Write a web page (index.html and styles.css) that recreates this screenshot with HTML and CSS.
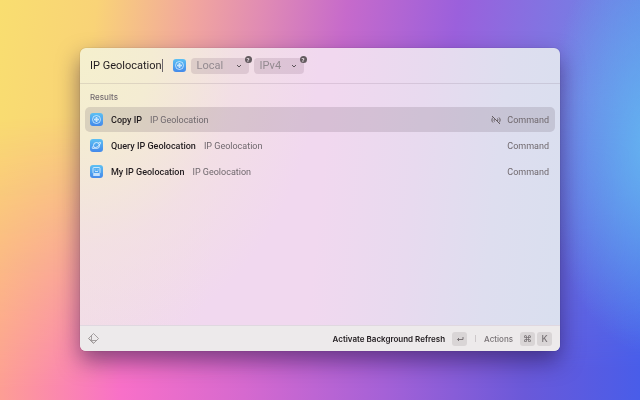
FILE: index.html
```
<!DOCTYPE html>
<html lang="en">
<head>
    <meta charset="UTF-8">
    <title>IP Geolocation</title>
    <link rel="stylesheet" href="styles.css">
</head>
<body>

    <svg class="defs" aria-hidden="true">
        <linearGradient id="blue" x1="0" y1="0" x2="0" y2="1">
            <stop offset="0" stop-color="#5cc0f3"/>
            <stop offset="1" stop-color="#4489ea"/>
        </linearGradient>
        <symbol id="icon-copy" viewBox="0 0 26 26">
            <rect width="26" height="26" rx="6" fill="url(#blue)"/>
            <g fill="none" stroke="#d8efff" stroke-width="1.6">
                <circle cx="13" cy="13" r="8"/>
                <circle cx="13" cy="13" r="3.500"/>
                <path d="M13 8v10M8 13h10"/>
            </g>
        </symbol>
        <symbol id="icon-query" viewBox="0 0 26 26">
            <rect width="26" height="26" rx="6" fill="url(#blue)"/>
            <g fill="none" stroke="#e4f4ff" stroke-width="1.8">
                <circle cx="13" cy="13" r="6"/>
                <path d="M17 8c3-2 5-2 4 1c-2 4-10 10-15 10c-3 0-1-3 1-5"/>
            </g>
        </symbol>
        <symbol id="icon-my" viewBox="0 0 26 26">
            <rect width="26" height="26" rx="6" fill="url(#blue)"/>
            <g fill="none" stroke="#e4f4ff" stroke-width="1.6">
                <rect x="6" y="5" width="14" height="12" rx="2"/>
                <path d="M10 9v2M16 9v2M10 13h6M7 21v-2h12v2z"/>
            </g>
        </symbol>
    </svg>

    <main class="window">
        <header class="search">
            <input class="search-input" type="text" value="IP Geolocation" aria-label="Search">
            <span class="caret"></span>
            <svg class="app-icon search-icon"><use href="#icon-copy"/></svg>
            <div class="argument local">
                <select aria-label="Scope"><option>Local</option></select>
                <svg class="chevron" viewBox="0 0 6 6"><path d="M1 2l2 2l2-2"/></svg>
                <span class="help">?</span>
            </div>
            <div class="argument">
                <select aria-label="IP version"><option>IPv4</option></select>
                <svg class="chevron" viewBox="0 0 6 6"><path d="M1 2l2 2l2-2"/></svg>
                <span class="help">?</span>
            </div>
        </header>

        <section class="results">
            <h2>Results</h2>
            <ul>
                <li class="row selected">
                    <svg class="app-icon"><use href="#icon-copy"/></svg>
                    <span class="name">Copy IP</span>
                    <span class="subtitle">IP Geolocation</span>
                    <svg class="inactive" viewBox="0 0 20 20">
                        <path d="M2 2l16 16M4 5c-3 3-3 7 0 10M7 8c-1 2-1 3 0 5M16 5c3 3 3 7 0 10M13 7c1 2 1 3 0 5"/>
                    </svg>
                    <span class="type">Command</span>
                </li>
                <li class="row">
                    <svg class="app-icon"><use href="#icon-query"/></svg>
                    <span class="name">Query IP Geolocation</span>
                    <span class="subtitle">IP Geolocation</span>
                    <span class="type">Command</span>
                </li>
                <li class="row">
                    <svg class="app-icon"><use href="#icon-my"/></svg>
                    <span class="name">My IP Geolocation</span>
                    <span class="subtitle">IP Geolocation</span>
                    <span class="type">Command</span>
                </li>
            </ul>
        </section>

        <footer class="actions">
            <svg class="logo" viewBox="0 0 22 22">
                <path d="M11 1l10 10l-10 10l-10-10z"/>
                <path d="M7 5v10h10M2 11l9 9"/>
            </svg>
            <button class="primary">Activate Background Refresh
                <kbd><svg class="return" viewBox="0 0 16 16"><path d="M14 4v5H3M6 6L3 9l3 3"/></svg></kbd>
            </button>
            <span class="divider"></span>
            <button class="secondary">Actions
                <span class="keys"><kbd>⌘</kbd><kbd>K</kbd></span>
            </button>
        </footer>
    </main>

</body>
</html>
```

FILE: styles.css
```
* {
    box-sizing: border-box;
}
body {
    display: flex;
    min-height: 100vh;
    margin: 0;
    padding: 48px 12.5% 49px;
    font-family: Roboto, "Liberation Sans", sans-serif;
    font-size: 9px;
    color: #211c1f;
    background: linear-gradient(98deg, #f9de70 0%, #f9d377 14%, #f1a69e 28%, #e08bb4 38%, #c66acb 50%, #9b60dc 66%, #777ce4 84%, #558bea 100%);
}
/* lower half of the wallpaper, faded into the upper one */
body::before {
    content: "";
    position: fixed;
    inset: 0;
    z-index: -1;
    background: linear-gradient(90deg, #fd9e94 0%, #fb86b0 10%, #f870c8 19%, #d669cf 38%, #a561d7 60%, #6a59d9 82%, #495de9 100%);
    -webkit-mask-image: linear-gradient(178deg, transparent 28%, #000 92%);
    mask-image: linear-gradient(178deg, transparent 28%, #000 92%);
}
/* blue glow on the right */
body::after {
    content: "";
    position: fixed;
    inset: 0;
    z-index: -1;
    background: radial-gradient(110px 210px at 102% 36%, #65b4f0 0%, #65b4f000 100%);
}
.defs {
    position: absolute;
    width: 0;
    height: 0;
}
.window {
    display: flex;
    flex-direction: column;
    flex: 1;
    border-radius: 6px;
    overflow: hidden;
    background:
        radial-gradient(50% 100% at 0 0, #f5f0cd 0%, #f4ecd3 30%, #f3e3df99 65%, #f2dbea00 100%),
        linear-gradient(96deg, #f2dde6 0%, #f1d8ef 30%, #f1d8ef 50%, #e8daef 68%, #dedeef 84%, #d9dfef 100%);
    box-shadow: 0 0 1px rgba(0, 0, 0, .4), 0 10px 22px rgba(30, 10, 60, .5);
}
.search {
    display: flex;
    align-items: center;
    height: 36px;
    padding: 0 10px;
    border-bottom: 1px solid rgba(90, 70, 90, .14);
}
.search-input {
    field-sizing: content;
    padding: 0;
    border: 0;
    outline: 0;
    background: none;
    font: 400 11px Roboto, "Liberation Sans", sans-serif;
    color: #211c1f;
}
.caret {
    width: 1px;
    height: 13px;
    background: #6d666b;
}
.app-icon {
    flex: none;
    width: 13px;
    height: 13px;
}
.search-icon {
    margin: 0 5px 0 10px;
}
.argument {
    position: relative;
    display: flex;
    align-items: center;
    width: 50px;
    height: 16px;
    margin-right: 5px;
    border-radius: 4px;
    background: rgba(100, 70, 95, .15);
}
.local {
    width: 58px;
}
.argument select {
    appearance: none;
    width: 100%;
    padding: 0 6px;
    border: 0;
    background: none;
    font: 11px Roboto, "Liberation Sans", sans-serif;
    color: #938a90;
}
.chevron {
    position: absolute;
    right: 7px;
    width: 6px;
    height: 6px;
    fill: none;
    stroke: #5c5359;
    pointer-events: none;
}
.help {
    position: absolute;
    top: -2px;
    right: -3px;
    width: 7px;
    height: 7px;
    border-radius: 50%;
    background: #635b5f;
    font-size: 6px;
    font-weight: 700;
    line-height: 7px;
    text-align: center;
    color: #f3e6ee;
}
.results {
    flex: 1;
    padding: 0 5px;
}
.results h2 {
    margin: 0;
    padding: 8px 5px 4px;
    font: 500 8px/11px Inter, "Liberation Sans", sans-serif;
    color: #736b70;
}
.results ul {
    display: grid;
    gap: 1px;
    margin: 0;
    padding: 0;
    list-style: none;
}
.row {
    display: flex;
    align-items: center;
    height: 25px;
    padding: 0 6px 0 5px;
    border-radius: 5px;
}
.selected {
    background: rgba(80, 60, 80, .16);
}
.name {
    margin: 0 8px;
    font-weight: 500;
}
.subtitle, .type {
    color: #6f686d;
}
.type {
    margin-left: auto;
}
.inactive {
    width: 10px;
    height: 10px;
    margin-left: auto;
    fill: none;
    stroke: #655d62;
    stroke-width: 2;
}
.inactive + .type {
    margin-left: 6px;
}
.actions {
    display: flex;
    align-items: center;
    height: 26px;
    padding: 0 8px;
    border-top: 1px solid #e0d8e0;
    background: #edeaeb;
}
.logo {
    width: 11px;
    height: 11px;
    margin-right: auto;
    fill: none;
    stroke: #8b8587;
    stroke-width: 1.5;
}
.actions button {
    display: flex;
    align-items: center;
    gap: 7px;
    padding: 0;
    border: 0;
    background: none;
    font: 500 8px Inter, "Liberation Sans", sans-serif;
    color: #777174;
}
.actions .primary {
    font-weight: 600;
    color: #211c1f;
}
.divider {
    width: 1px;
    height: 7px;
    margin: 0 8px;
    background: #cdc8ca;
}
.keys {
    display: flex;
    gap: 2px;
}
kbd {
    display: flex;
    align-items: center;
    justify-content: center;
    width: 15px;
    height: 14px;
    border-radius: 3px;
    background: #d9d5d6;
    font: 500 9px Inter, "DejaVu Sans", sans-serif;
    color: #777174;
}
.return {
    width: 8px;
    height: 8px;
    fill: none;
    stroke: #777174;
    stroke-width: 2;
}
```
